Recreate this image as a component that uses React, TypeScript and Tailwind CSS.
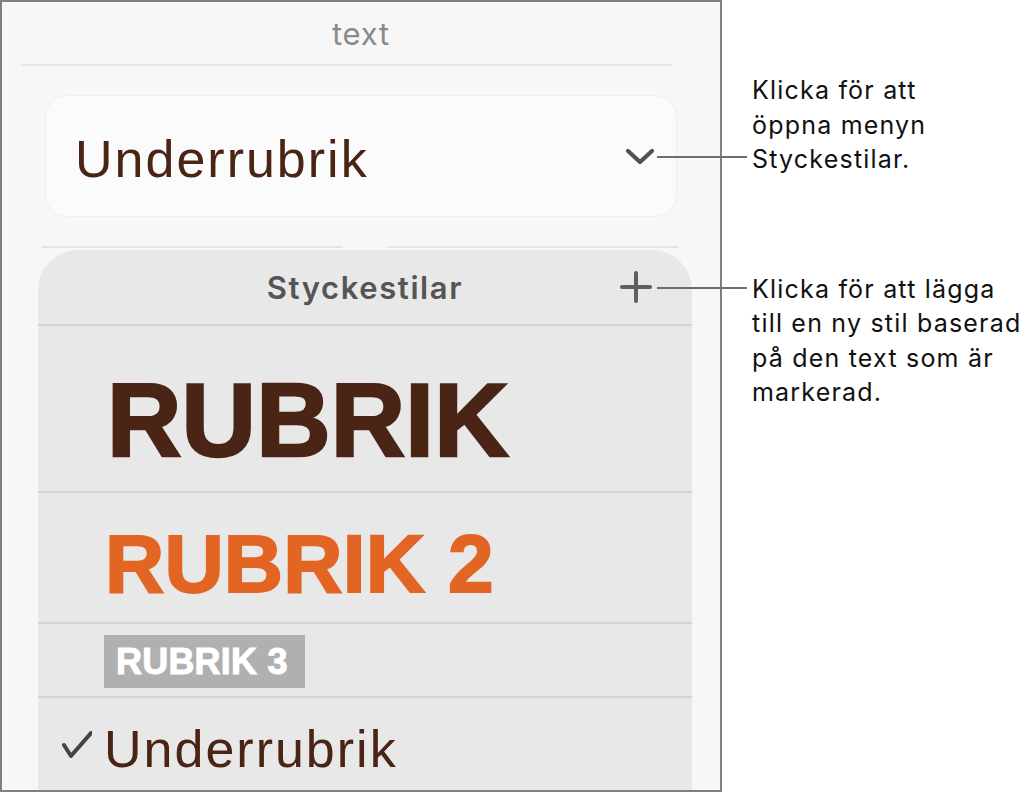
const sans = "font-['Liberation_Sans',Arial,sans-serif]";
const ui = "font-['Inter','Noto_Sans',sans-serif]";

function Divider({ className }: { className: string }) {
    return <div className={`h-[2px] shrink-0 ${className}`} />;
}

function Chevron() {
    return (
        <svg width="30" height="18" viewBox="0 0 30 18" className="mt-[15px] shrink-0">
            <polyline points="3,3 15,14 27,3" fill="none" stroke="#525252" strokeWidth="4.2" strokeLinecap="round" strokeLinejoin="round" />
        </svg>
    );
}

function Plus() {
    return (
        <svg width="32" height="32" viewBox="0 0 32 32">
            <path d="M16 2 V30 M2 16 H30" stroke="#5f5f5f" strokeWidth="4" strokeLinecap="round" />
        </svg>
    );
}

function Check() {
    return (
        <svg width="30" height="27" viewBox="0 0 30 27" className="mt-[8px] shrink-0">
            <polyline points="2,14 9,25 29,2" fill="none" stroke="#444" strokeWidth="4" strokeLinecap="round" strokeLinejoin="round" />
        </svg>
    );
}

function Popover() {
    return (
        <div className="ml-[36px] mt-[2px] w-[654px] flex-1 rounded-t-[40px] bg-[#e8e8e8] flex flex-col">
            <div className="h-[74px] grid grid-cols-[1fr_auto_1fr] items-center">
                <div />
                <p className={`${ui} text-[31px] font-semibold tracking-[1.6px] text-[#555] leading-none`}>Styckestilar</p>
                <div className="flex justify-end pr-[40px]">
                    <Plus />
                </div>
            </div>
            <Divider className="bg-[#d3d3d3]" />
            <div className="h-[165px] shrink-0 pt-[43px] pl-[69px]">
                <p className={`${sans} text-[103px] font-bold leading-none tracking-[0.2px] text-[#4a2415] [-webkit-text-stroke:2.5px_#4a2415]`}>RUBRIK</p>
            </div>
            <Divider className="bg-[#d3d3d3]" />
            <div className="h-[129px] shrink-0 pt-[30px] pl-[67px]">
                <p className={`${sans} text-[82px] font-bold leading-none tracking-[0.2px] text-[#e36524] [-webkit-text-stroke:2px_#e36524]`}>RUBRIK 2</p>
            </div>
            <Divider className="bg-[#d3d3d3]" />
            <div className="h-[72px] shrink-0 pt-[11px] pl-[66px]">
                <div className="h-[53px] w-[201px] bg-[#b0b0b0] flex items-center pl-[12px]">
                    <p className={`${sans} text-[36px] font-bold leading-none tracking-[0.2px] text-white [-webkit-text-stroke:1px_#ffffff]`}>RUBRIK 3</p>
                </div>
            </div>
            <Divider className="bg-[#d3d3d3]" />
            <div className="flex items-start pt-[25px] pl-[24px]">
                <Check />
                <p className={`${sans} ml-[12px] text-[52px] leading-none tracking-[2px] text-[#4a2415]`}>Underrubrik</p>
            </div>
        </div>
    );
}

export default function App() {
    return (
        <div className="relative w-[1028px] h-[793px] bg-white flex">
            <div className="w-[722px] h-[792px] shrink-0 border-2 border-[#7f7f7f] bg-[#f7f7f7] overflow-hidden flex flex-col">
                <div className="h-[62px] shrink-0 flex items-center justify-center">
                    <p className={`${ui} text-[31px] tracking-[0.8px] text-[#8a8a8a] leading-none`}>text</p>
                </div>
                <Divider className="ml-[19px] w-[651px] bg-[#e4e4e4]" />
                <div className="mt-[29px] ml-[43px] w-[632px] h-[122px] shrink-0 rounded-[22px] border border-[#f0f0f0] bg-[#fbfbfb] flex items-start justify-between pt-[37px] pl-[29px] pr-[21px]">
                    <p className={`${sans} text-[52px] leading-none tracking-[2px] text-[#4a2415]`}>Underrubrik</p>
                    <Chevron />
                </div>
                <Divider className="mt-[29px] ml-[40px] w-[636px] bg-[#e4e4e4]" />
                <Popover />
            </div>

            <div className={`${ui} ml-[30px] text-[25px] leading-[34.5px] tracking-[1.2px] text-[#111] whitespace-nowrap`}>
                <p className="mt-[73px]">
                    Klicka för att
                    <br />
                    öppna menyn
                    <br />
                    Styckestilar.
                </p>
                <p className="mt-[95px]">
                    Klicka för att lägga
                    <br />
                    till en ny stil baserad
                    <br />
                    på den text som är
                    <br />
                    markerad.
                </p>
            </div>

            <svg width="66" height="28" viewBox="0 0 66 28" className="absolute left-[332px] top-[222px]">
                <path d="M0 28 C8 28 12 25 18 18 L28 5 Q33 -1 38 5 L48 18 C54 25 58 28 66 28 Z" fill="#f7f7f5" />
            </svg>
            <div className="absolute left-[657px] top-[156px] w-[90px] h-[2px] bg-[#6d6d6d]" />
            <div className="absolute left-[657px] top-[287px] w-[90px] h-[2px] bg-[#6d6d6d]" />
        </div>
    );
}
